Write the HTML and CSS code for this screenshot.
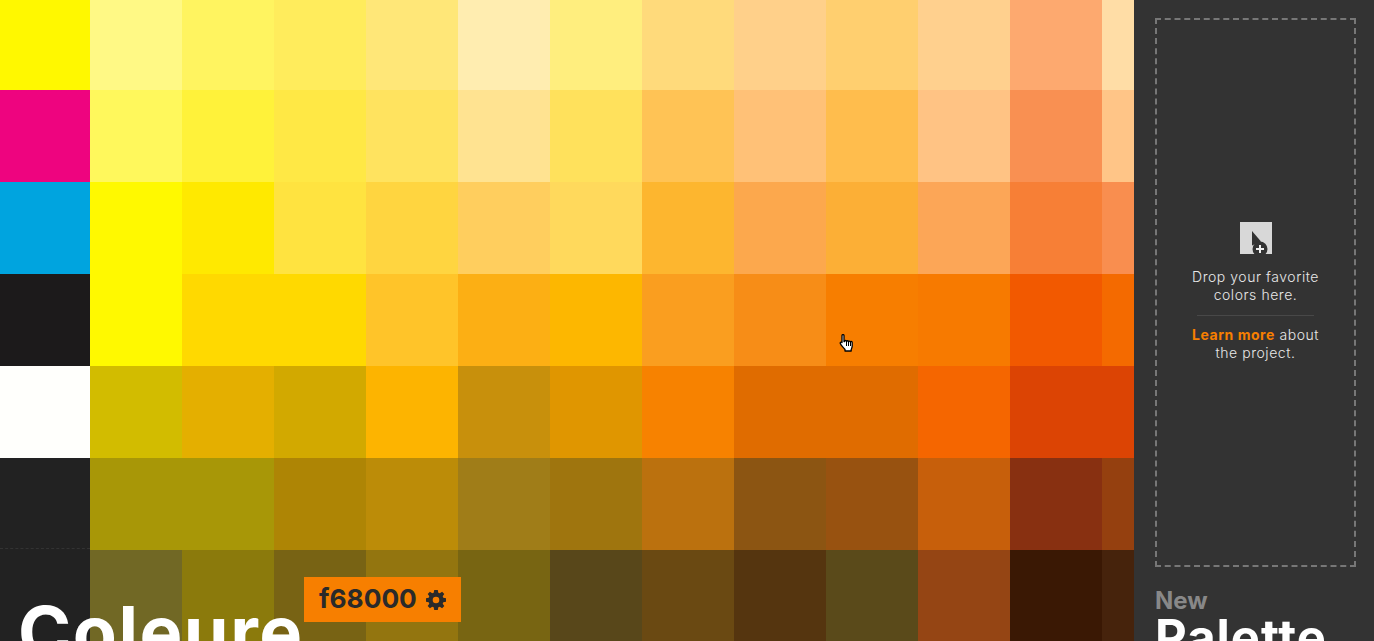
FILE: index.html
```html
<!DOCTYPE html>
<html lang="en">
<head>
<meta charset="utf-8">
<title>Coleure</title>
<link rel="stylesheet" href="styles.css">
</head>
<body>
<div class="app">
  <main class="board">
    <div class="grid">
      <div class="swatch" style="background:#fff800"></div><div class="swatch" style="background:#fff985"></div><div class="swatch" style="background:#fff460"></div><div class="swatch" style="background:#ffec5c"></div><div class="swatch" style="background:#ffe778"></div><div class="swatch" style="background:#ffedb0"></div><div class="swatch" style="background:#ffee7e"></div><div class="swatch" style="background:#ffda7b"></div><div class="swatch" style="background:#ffd08a"></div><div class="swatch" style="background:#ffcf6f"></div><div class="swatch" style="background:#ffd08e"></div><div class="swatch" style="background:#fda96f"></div><div class="swatch" style="background:#ffdda6"></div>
      <div class="swatch" style="background:#ee047f"></div><div class="swatch" style="background:#fff85c"></div><div class="swatch" style="background:#fff23a"></div><div class="swatch" style="background:#ffe845"></div><div class="swatch" style="background:#ffe35f"></div><div class="swatch" style="background:#ffe391"></div><div class="swatch" style="background:#ffe15c"></div><div class="swatch" style="background:#ffc355"></div><div class="swatch" style="background:#ffc177"></div><div class="swatch" style="background:#ffbd4d"></div><div class="swatch" style="background:#ffc384"></div><div class="swatch" style="background:#f99052"></div><div class="swatch" style="background:#ffc587"></div>
      <div class="swatch" style="background:#00a4df"></div><div class="swatch" style="background:#fff900"></div><div class="swatch" style="background:#ffe900"></div><div class="swatch" style="background:#ffe340"></div><div class="swatch" style="background:#ffd540"></div><div class="swatch" style="background:#ffce5e"></div><div class="swatch" style="background:#ffd95c"></div><div class="swatch" style="background:#fdb62f"></div><div class="swatch" style="background:#fca84d"></div><div class="swatch" style="background:#fcaf36"></div><div class="swatch" style="background:#fca657"></div><div class="swatch" style="background:#f77f36"></div><div class="swatch" style="background:#f98e4f"></div>
      <div class="swatch" style="background:#1c1a1b"></div><div class="swatch" style="background:#fff900"></div><div class="swatch" style="background:#ffd900"></div><div class="swatch" style="background:#ffd900"></div><div class="swatch" style="background:#ffc429"></div><div class="swatch" style="background:#fcaf14"></div><div class="swatch" style="background:#fdb700"></div><div class="swatch" style="background:#fa9e1f"></div><div class="swatch" style="background:#f78d17"></div><div class="swatch" style="background:#f77e00"></div><div class="swatch" style="background:#f77a00"></div><div class="swatch" style="background:#f25900"></div><div class="swatch" style="background:#f46a00"></div>
      <div class="swatch" style="background:#fffffc"></div><div class="swatch" style="background:#d2bc00"></div><div class="swatch" style="background:#e4af00"></div><div class="swatch" style="background:#d2a900"></div><div class="swatch" style="background:#fdb400"></div><div class="swatch" style="background:#c8900c"></div><div class="swatch" style="background:#e09600"></div><div class="swatch" style="background:#f78200"></div><div class="swatch" style="background:#e06c00"></div><div class="swatch" style="background:#e06c00"></div><div class="swatch" style="background:#f56600"></div><div class="swatch" style="background:#dc4404"></div><div class="swatch" style="background:#dc4404"></div>
      <div class="swatch" style="background:#222"></div><div class="swatch" style="background:#a89707"></div><div class="swatch" style="background:#a89707"></div><div class="swatch" style="background:#ae8505"></div><div class="swatch" style="background:#bc8c08"></div><div class="swatch" style="background:#a07d18"></div><div class="swatch" style="background:#9f750e"></div><div class="swatch" style="background:#bb710e"></div><div class="swatch" style="background:#8c5512"></div><div class="swatch" style="background:#985210"></div><div class="swatch" style="background:#c75f0b"></div><div class="swatch" style="background:#883011"></div><div class="swatch" style="background:#95400f"></div>
      <div class="swatch" style="background:#222"></div><div class="swatch" style="background:#716825"></div><div class="swatch" style="background:#8b7a0c"></div><div class="swatch" style="background:#786314"></div><div class="swatch" style="background:#93750f"></div><div class="swatch" style="background:#786512"></div><div class="swatch" style="background:#58471a"></div><div class="swatch" style="background:#6a4912"></div><div class="swatch" style="background:#55350f"></div><div class="swatch" style="background:#5a4a1a"></div><div class="swatch" style="background:#954514"></div><div class="swatch" style="background:#3a1804"></div><div class="swatch" style="background:#46230c"></div>
    </div>
    <div class="rule"></div>
    <h1 class="brand">Coleure</h1>
    <div class="tip">
      <span class="tip-code">f68000</span>
      <svg class="gear" viewBox="0 0 20 20" aria-hidden="true"><path fill-rule="evenodd" d="M8.2 0h3.6l.5 2.7 1.5.6L16.1 1.700l2.200 2.200-1.600 2.300.6 1.500 2.700.5v3.600l-2.700.5-.6 1.500 1.600 2.300-2.200 2.200-2.300-1.600-1.500.6-.5 2.700H8.200l-.5-2.700-1.500-.6-2.300 1.600-2.200-2.200 1.600-2.300-.6-1.500L0 11.800V8.200l2.700-.5.6-1.500L1.700 3.900l2.200-2.200 2.300 1.600 1.500-.6zM10 6.700a3.300 3.300 0 1 0 0 6.600 3.300 3.300 0 0 0 0-6.600z"/></svg>
    </div>
    <svg class="pointer" viewBox="0 0 15 19" aria-hidden="true"><path fill="#fff" stroke="#000" stroke-width="1.300" stroke-linejoin="round" d="M2.500 1.500c0-1.200 2-1.200 2 0v6h.6c0-1.400 1.900-1.400 1.900 0 0-1.100 1.900-1.100 1.900.2 0-1 1.900-.9 1.900.4 0-.9 1.900-.9 1.900.4v3.500c0 1.500-.6 2.400-1 3.500v1.500H5.500v-1.500C4 13.500 1.500 11.500.8 9.500c-.4-1 .8-1.900 1.700-.9v-7z"/><path stroke="#000" fill="none" stroke-width="1" d="M7 8v4M9 8v4M11 8v4"/></svg>
  </main>
  <aside class="side">
    <div class="drop">
      <svg class="drop-icon" viewBox="0 0 32 32" aria-hidden="true"><rect width="32" height="32" fill="#d8d8d8"/><path fill="#333" d="M12 9l9 10.500-9 4z"/><circle cx="20" cy="27" r="7.500" fill="#333"/><path fill="#f0f0f0" d="M19 23h2v3h3v2h-3v3h-2v-3h-3v-2h3z"/></svg>
      <p class="drop-text">Drop your favorite<br>colors here.</p>
      <hr class="drop-line">
      <p class="drop-text"><a class="drop-link" href="#">Learn more</a> about<br>the project.</p>
    </div>
    <div class="new">New</div>
    <div class="palette">Palette</div>
  </aside>
</div>
</body>
</html>
```
FILE: styles.css
```css
html, body {
  margin: 0;
  height: 100%;
  overflow: hidden;
}
body {
  font-family: Inter, "Liberation Sans", sans-serif;
}
.app {
  display: flex;
  height: 641px;
  overflow: hidden;
}
.board {
  position: relative;
  width: 1134px;
  flex: none;
  overflow: hidden;
  background: #222;
}
.grid {
  display: grid;
  grid-template-columns: 90px repeat(12, 92px);
  grid-template-rows: 90px repeat(6, 92px);
}
.rule {
  position: absolute;
  left: 0;
  top: 548px;
  width: 90px;
  border-top: 1px dashed #333;
}
.brand {
  position: absolute;
  left: 18px;
  top: 591px;
  margin: 0;
  font-size: 72px;
  line-height: 82px;
  font-weight: 700;
  color: #fff;
  letter-spacing: 1.5px;
}
.tip {
  position: absolute;
  left: 304px;
  top: 577px;
  width: 157px;
  height: 45px;
  box-sizing: border-box;
  padding-left: 15px;
  display: flex;
  align-items: center;
  gap: 9px;
  background: #f77f00;
  color: #2a2a2a;
}
.tip-code {
  font-size: 26.3px;
  font-weight: 700;
  line-height: 1;
}
.gear {
  width: 20px;
  height: 20px;
  fill: #2a2a2a;
}
.pointer {
  position: absolute;
  left: 839px;
  top: 334px;
  width: 16px;
  height: 19px;
}
.side {
  flex: 1;
  min-width: 0;
  background: #333;
  padding: 18px 18px 0 21px;
  box-sizing: border-box;
}
.drop {
  box-sizing: border-box;
  height: 549px;
  border: 2px dashed #777;
  display: flex;
  flex-direction: column;
  align-items: center;
  justify-content: flex-start;
  padding-top: 202px;
}
.drop-icon {
  width: 32px;
  height: 32px;
  margin-bottom: 14px;
}
.drop-text {
  margin: 0;
  font-size: 14px;
  font-weight: 300;
  letter-spacing: 0.55px;
  line-height: 18px;
  color: #e8e8e8;
  text-align: center;
}
.drop-link {
  color: #f77f00;
  font-weight: 700;
  text-decoration: none;
}
.drop-line {
  width: 117px;
  height: 1px;
  margin: 11px 0 10px;
  border: 0;
  background: #484848;
}
.new {
  margin-top: 20px;
  font-size: 24px;
  line-height: 28px;
  font-weight: 700;
  color: #888;
}
.palette {
  font-size: 49px;
  line-height: 46px;
  letter-spacing: 1px;
  font-weight: 700;
  color: #fff;
}
```
